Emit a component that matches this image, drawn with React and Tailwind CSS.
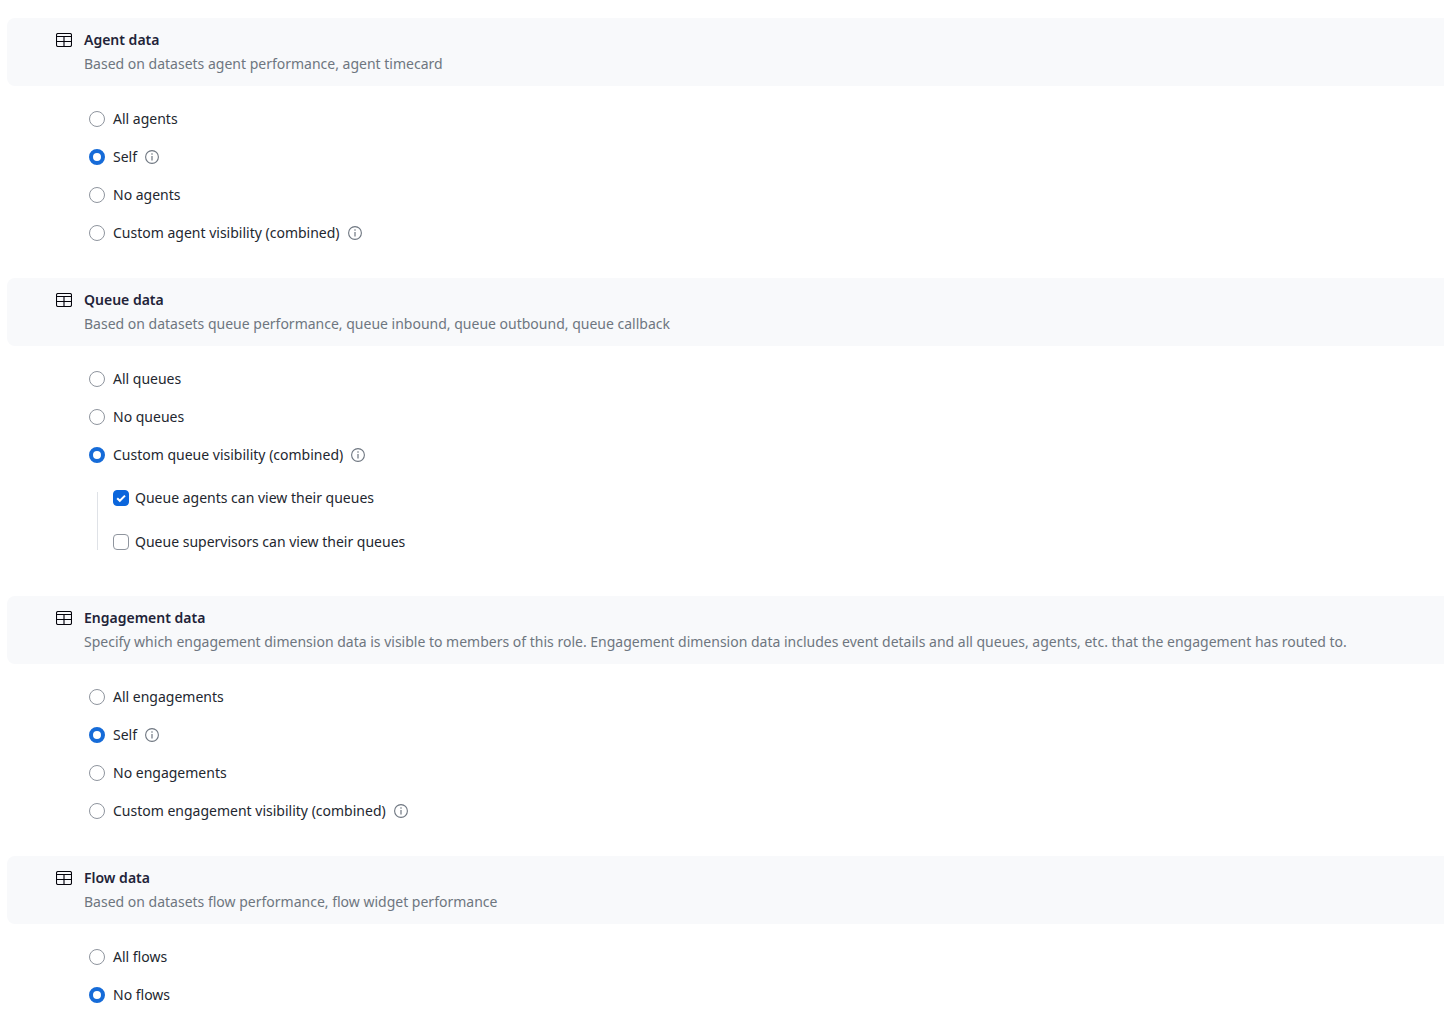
import React, { useState } from 'react';

const sections = [
  {
    id: 'agent',
    title: 'Agent data',
    description: 'Based on datasets agent performance, agent timecard',
    selected: 'Self',
    options: [
      { label: 'All agents' },
      { label: 'Self', info: true },
      { label: 'No agents' },
      { label: 'Custom agent visibility (combined)', info: true },
    ],
  },
  {
    id: 'queue',
    title: 'Queue data',
    description: 'Based on datasets queue performance, queue inbound, queue outbound, queue callback',
    selected: 'Custom queue visibility (combined)',
    options: [
      { label: 'All queues' },
      { label: 'No queues' },
      {
        label: 'Custom queue visibility (combined)',
        info: true,
        checks: [
          { label: 'Queue agents can view their queues', checked: true },
          { label: 'Queue supervisors can view their queues', checked: false },
        ],
      },
    ],
  },
  {
    id: 'engagement',
    title: 'Engagement data',
    description:
      'Specify which engagement dimension data is visible to members of this role. Engagement dimension data includes event details and all queues, agents, etc. that the engagement has routed to.',
    selected: 'Self',
    options: [
      { label: 'All engagements' },
      { label: 'Self', info: true },
      { label: 'No engagements' },
      { label: 'Custom engagement visibility (combined)', info: true },
    ],
  },
  {
    id: 'flow',
    title: 'Flow data',
    description: 'Based on datasets flow performance, flow widget performance',
    selected: 'No flows',
    options: [{ label: 'All flows' }, { label: 'No flows' }],
  },
];

const TableIcon = () => (
  <svg width="16" height="14" viewBox="0 0 16 14" fill="none" className="shrink-0" aria-hidden="true">
    <path d="M8 4v9" stroke="#6b6b73" strokeWidth="2" />
    <rect x="0.5" y="0.5" width="15" height="13" rx="1.5" stroke="#05050c" strokeWidth="1.1" />
    <path d="M0.5 3.5h15M0.5 8.5h15" stroke="#05050c" strokeWidth="1.1" />
  </svg>
);

const InfoButton = ({ label }) => (
  <button type="button" aria-label={`About ${label}`} className="shrink-0 cursor-pointer text-[#6e7680]">
    <svg width="14" height="14" viewBox="0 0 14 14" fill="none" aria-hidden="true">
      <circle cx="7" cy="7" r="6.4" stroke="currentColor" strokeWidth="1.1" />
      <path d="M7 6v4.5" stroke="currentColor" strokeWidth="1.2" />
      <circle cx="7" cy="4" r="0.8" fill="currentColor" />
    </svg>
  </button>
);

const CheckOption = ({ id, label, defaultChecked }) => (
  <div className="flex h-11 items-center gap-1.5">
    <span className="grid shrink-0">
      <input
        id={id}
        type="checkbox"
        defaultChecked={defaultChecked}
        className="peer col-start-1 row-start-1 size-4 appearance-none rounded border border-[#8f959e] bg-white checked:border-[#0b66dc] checked:bg-[#0b66dc]"
      />
      <svg
        viewBox="0 0 16 16"
        fill="none"
        className="pointer-events-none invisible col-start-1 row-start-1 size-4 peer-checked:visible"
        aria-hidden="true"
      >
        <path d="M4.2 8.2l2.6 2.6 5.2-5.2" stroke="white" strokeWidth="2" />
      </svg>
    </span>
    <label htmlFor={id}>{label}</label>
  </div>
);

const DataSection = ({ section }) => {
  const [selected, setSelected] = useState(section.selected);

  return (
    <section>
      <header className="flex gap-3 rounded-l-lg bg-[#f8f9fb] py-2.5 pr-4 pl-[49px]">
        <span className="flex h-6 items-center">
          <TableIcon />
        </span>
        <div>
          <h2 className="font-semibold text-[#222338]">{section.title}</h2>
          <p className="text-[#6e7680]">{section.description}</p>
        </div>
      </header>

      <div className="pt-3.5 pl-[82px]" role="radiogroup" aria-label={section.title}>
        {section.options.map((option, idx) => (
          <div key={option.label}>
            <div className="flex h-[38px] items-center gap-2">
              <input
                id={`${section.id}-${idx}`}
                type="radio"
                name={section.id}
                checked={selected === option.label}
                onChange={() => setSelected(option.label)}
                className="size-4 shrink-0 appearance-none rounded-full border border-[#8f959e] bg-white checked:border-4 checked:border-[#166bd8]"
              />
              <label htmlFor={`${section.id}-${idx}`}>{option.label}</label>
              {option.info && <InfoButton label={option.label} />}
            </div>
            {option.checks && selected === option.label && (
              <div className="mt-0.5 mb-1.5 flex gap-[15px] pl-2">
                <span className="mt-4 mb-3.5 w-px bg-[#dfe2e7]" />
                <div>
                  {option.checks.map((check, i) => (
                    <CheckOption
                      key={check.label}
                      id={`${section.id}-${idx}-${i}`}
                      label={check.label}
                      defaultChecked={check.checked}
                    />
                  ))}
                </div>
              </div>
            )}
          </div>
        ))}
      </div>
    </section>
  );
};

const App = () => (
  <main className="flex flex-col gap-[26px] bg-white pt-[18px] pl-[7px] font-['Noto_Sans',sans-serif] text-sm leading-6 text-[#23272f]">
    {sections.map((section) => (
      <DataSection key={section.id} section={section} />
    ))}
  </main>
);

export default App;
